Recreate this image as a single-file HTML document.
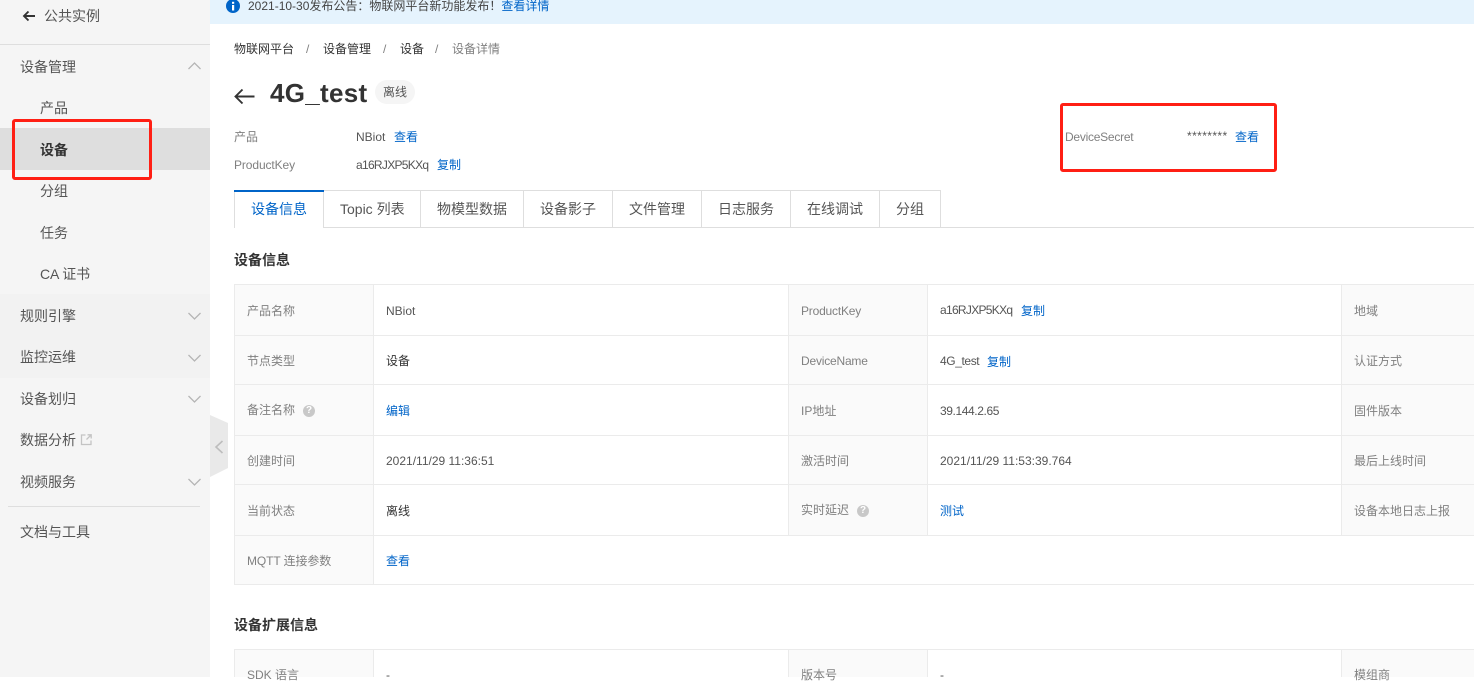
<!DOCTYPE html>
<html lang="zh">
<head>
<meta charset="utf-8">
<style>
html,body{margin:0;padding:0;background:#fff}
body{width:1474px;height:677px;position:relative;overflow:hidden;font-family:"Liberation Sans","Noto Sans CJK SC",sans-serif;color:#333;font-size:12px}
.t{position:absolute;white-space:nowrap;line-height:20px;height:20px}
.a{color:#0064c8}
.l{color:#808080}
.g{color:#555}
.d{color:#333}
.m{font-size:14px;color:#555}
.b{position:absolute;background:#ebebeb}
.c{position:absolute;background:#fafafa}
.tb{position:absolute;background:#dedede}
svg{position:absolute;overflow:visible}
.box{position:absolute;border:3px solid #ff1f14;border-radius:3px;box-sizing:border-box}
.q{position:absolute;width:12px;height:12px;border-radius:50%;background:#c8c8c8;color:#fff;font-size:10px;line-height:12px;text-align:center;font-weight:bold}
</style>
</head>
<body>
<!-- sidebar -->
<div style="position:absolute;left:0;top:0;width:210px;height:677px;background:#f5f5f5"></div>
<div style="position:absolute;left:0;top:128px;width:210px;height:42px;background:#dedede"></div>
<div style="position:absolute;left:0;top:294px;width:210px;height:84px;background:#f2f2f2"></div>
<div style="position:absolute;left:0;top:44px;width:210px;height:1px;background:#dedede"></div>
<div style="position:absolute;left:8px;top:506px;width:192px;height:1px;background:#dedede"></div>
<svg style="left:22px;top:10px" width="14" height="12" viewBox="0 0 14 12"><path d="M13 6H2M6.500 1.500L2 6l4.500 4.500" fill="none" stroke="#333" stroke-width="1.900"/></svg>
<div class="t m" style="left:44px;top:6px">公共实例</div>
<div class="t m" style="left:20px;top:57px">设备管理</div>
<div class="t m" style="left:40px;top:98px">产品</div>
<div class="t" style="left:40px;top:140px;font-size:14px;font-weight:bold;color:#333">设备</div>
<div class="t m" style="left:40px;top:181px">分组</div>
<div class="t m" style="left:40px;top:223px">任务</div>
<div class="t m" style="left:40px;top:264px;letter-spacing:-.1px">CA 证书</div>
<div class="t m" style="left:20px;top:306px">规则引擎</div>
<div class="t m" style="left:20px;top:347px">监控运维</div>
<div class="t m" style="left:20px;top:389px">设备划归</div>
<div class="t m" style="left:20px;top:430px">数据分析</div>
<div class="t m" style="left:20px;top:472px">视频服务</div>
<div class="t m" style="left:20px;top:522px">文档与工具</div>
<svg style="left:188px;top:62px" width="13" height="8" viewBox="0 0 13 8"><path d="M.5 7L6.500 1l6 6" fill="none" stroke="#b5b5b5" stroke-width="1.300"/></svg>
<svg style="left:188px;top:312px" width="13" height="8" viewBox="0 0 13 8"><path d="M.5 1l6 6 6-6" fill="none" stroke="#b5b5b5" stroke-width="1.300"/></svg>
<svg style="left:188px;top:354px" width="13" height="8" viewBox="0 0 13 8"><path d="M.5 1l6 6 6-6" fill="none" stroke="#b5b5b5" stroke-width="1.300"/></svg>
<svg style="left:188px;top:395px" width="13" height="8" viewBox="0 0 13 8"><path d="M.5 1l6 6 6-6" fill="none" stroke="#b5b5b5" stroke-width="1.300"/></svg>
<svg style="left:188px;top:478px" width="13" height="8" viewBox="0 0 13 8"><path d="M.5 1l6 6 6-6" fill="none" stroke="#b5b5b5" stroke-width="1.300"/></svg>
<svg style="left:81px;top:434px" width="11" height="11" viewBox="0 0 11 11"><path d="M4.500 1H.5v9.500h9.500V6.500M6.500 .8h3.700v3.700M10 1L5.500 5.500" fill="none" stroke="#c4c4c4" stroke-width="1.300"/></svg>
<svg style="left:210px;top:415px" width="18" height="62" viewBox="0 0 18 62"><path d="M0 0L18 8V53L0 62Z" fill="#e9e9e9"/><path d="M12.500 26L6 32l6.500 6" fill="none" stroke="#bdbdbd" stroke-width="1.600"/></svg>

<!-- notice -->
<div style="position:absolute;left:210px;top:0;width:1264px;height:24px;background:#e5f3fd"></div>
<svg style="left:226px;top:-1px" width="14" height="14" viewBox="0 0 14 14"><circle cx="7" cy="7" r="7" fill="#0064c8"/><rect x="6" y="6" width="2.200" height="5.500" fill="#fff"/><rect x="6" y="2.800" width="2.200" height="2" fill="#fff"/></svg>
<div class="t" style="left:248px;top:-4px;color:#444">2021-10-30发布公告：物联网平台新功能发布！<span class="a">查看详情</span></div>

<!-- breadcrumb -->
<div class="t d" style="left:234px;top:39px">物联网平台</div>
<div class="t l" style="left:306px;top:39px">/</div>
<div class="t d" style="left:323px;top:39px">设备管理</div>
<div class="t l" style="left:383px;top:39px">/</div>
<div class="t d" style="left:400px;top:39px">设备</div>
<div class="t l" style="left:435px;top:39px">/</div>
<div class="t l" style="left:452px;top:39px">设备详情</div>

<!-- title -->
<svg style="left:234px;top:88px" width="21" height="17" viewBox="0 0 21 17"><path d="M20.500 8.500H1.500M8.500 1.500l-7 7 7 7" fill="none" stroke="#333" stroke-width="1.900"/></svg>
<div class="t" style="left:270px;top:78px;height:30px;line-height:30px;font-size:26px;font-weight:bold;color:#333;letter-spacing:.3px">4G_test</div>
<div style="position:absolute;left:375px;top:80px;width:40px;height:24px;border-radius:12px;background:#f5f5f5;color:#555;text-align:center;line-height:24px">离线</div>

<div class="t l" style="left:234px;top:127px">产品</div>
<div class="t g" style="left:356px;top:127px">NBiot</div>
<div class="t a" style="left:394px;top:127px">查看</div>
<div class="t l" style="left:234px;top:155px;letter-spacing:-.1px">ProductKey</div>
<div class="t g" style="left:356px;top:155px;letter-spacing:-.7px">a16RJXP5KXq</div>
<div class="t a" style="left:437px;top:155px">复制</div>
<div class="t l" style="left:1065px;top:127px;letter-spacing:-.25px">DeviceSecret</div>
<div class="t g" style="left:1187px;top:126px;letter-spacing:.4px">********</div>
<div class="t a" style="left:1235px;top:127px">查看</div>

<!-- tabs -->
<div class="tb" style="left:234px;top:227px;width:1240px;height:1px"></div>
<div class="tb" style="left:323px;top:190px;width:618px;height:1px"></div>
<div class="tb" style="left:234px;top:190px;width:1px;height:38px"></div>
<div class="tb" style="left:323px;top:190px;width:1px;height:38px"></div>
<div class="tb" style="left:420px;top:190px;width:1px;height:38px"></div>
<div class="tb" style="left:523px;top:190px;width:1px;height:38px"></div>
<div class="tb" style="left:612px;top:190px;width:1px;height:38px"></div>
<div class="tb" style="left:701px;top:190px;width:1px;height:38px"></div>
<div class="tb" style="left:790px;top:190px;width:1px;height:38px"></div>
<div class="tb" style="left:879px;top:190px;width:1px;height:38px"></div>
<div class="tb" style="left:940px;top:190px;width:1px;height:38px"></div>
<div style="position:absolute;left:235px;top:191px;width:88px;height:37px;background:#fff"></div>
<div style="position:absolute;left:234px;top:190px;width:90px;height:2px;background:#0064c8"></div>
<div class="t m a" style="left:251px;top:199px;color:#0064c8">设备信息</div>
<div class="t m" style="left:340px;top:199px">Topic 列表</div>
<div class="t m" style="left:437px;top:199px">物模型数据</div>
<div class="t m" style="left:540px;top:199px">设备影子</div>
<div class="t m" style="left:629px;top:199px">文件管理</div>
<div class="t m" style="left:718px;top:199px">日志服务</div>
<div class="t m" style="left:807px;top:199px">在线调试</div>
<div class="t m" style="left:896px;top:199px">分组</div>

<div class="t" style="left:234px;top:250px;font-size:14px;font-weight:bold;color:#333">设备信息</div>

<!-- table 1 backgrounds -->
<div class="c" style="left:235px;top:285px;width:138px;height:299px"></div>
<div class="c" style="left:789px;top:285px;width:138px;height:250px"></div>
<div class="c" style="left:1342px;top:285px;width:132px;height:250px"></div>
<div class="b" style="left:234px;top:284px;width:1240px;height:1px"></div>
<div class="b" style="left:234px;top:335px;width:1240px;height:1px"></div>
<div class="b" style="left:234px;top:384px;width:1240px;height:1px"></div>
<div class="b" style="left:234px;top:435px;width:1240px;height:1px"></div>
<div class="b" style="left:234px;top:484px;width:1240px;height:1px"></div>
<div class="b" style="left:234px;top:535px;width:1240px;height:1px"></div>
<div class="b" style="left:234px;top:584px;width:1240px;height:1px"></div>
<div class="b" style="left:234px;top:284px;width:1px;height:301px"></div>
<div class="b" style="left:373px;top:284px;width:1px;height:301px"></div>
<div class="b" style="left:788px;top:284px;width:1px;height:252px"></div>
<div class="b" style="left:927px;top:284px;width:1px;height:252px"></div>
<div class="b" style="left:1341px;top:284px;width:1px;height:252px"></div>

<div class="t l" style="left:247px;top:301px">产品名称</div>
<div class="t g" style="left:386px;top:301px">NBiot</div>
<div class="t l" style="left:801px;top:301px;letter-spacing:-.2px">ProductKey</div>
<div class="t g" style="left:940px;top:300px;letter-spacing:-.7px">a16RJXP5KXq</div>
<div class="t a" style="left:1021px;top:301px">复制</div>
<div class="t l" style="left:1354px;top:301px">地域</div>

<div class="t l" style="left:247px;top:351px">节点类型</div>
<div class="t d" style="left:386px;top:351px">设备</div>
<div class="t l" style="left:801px;top:351px;letter-spacing:-.2px">DeviceName</div>
<div class="t g" style="left:940px;top:351px;letter-spacing:-.4px">4G_test</div>
<div class="t a" style="left:987px;top:352px">复制</div>
<div class="t l" style="left:1354px;top:351px">认证方式</div>

<div class="t l" style="left:247px;top:400px">备注名称</div>
<div class="q" style="left:303px;top:405px">?</div>
<div class="t a" style="left:386px;top:401px">编辑</div>
<div class="t l" style="left:801px;top:401px">IP地址</div>
<div class="t g" style="left:940px;top:401px;letter-spacing:-.4px">39.144.2.65</div>
<div class="t l" style="left:1354px;top:401px">固件版本</div>

<div class="t l" style="left:247px;top:451px">创建时间</div>
<div class="t g" style="left:386px;top:451px">2021/11/29 11:36:51</div>
<div class="t l" style="left:801px;top:451px">激活时间</div>
<div class="t g" style="left:940px;top:451px">2021/11/29 11:53:39.764</div>
<div class="t l" style="left:1354px;top:451px">最后上线时间</div>

<div class="t l" style="left:247px;top:501px">当前状态</div>
<div class="t d" style="left:386px;top:501px">离线</div>
<div class="t l" style="left:801px;top:500px">实时延迟</div>
<div class="q" style="left:857px;top:505px">?</div>
<div class="t a" style="left:940px;top:501px">测试</div>
<div class="t l" style="left:1354px;top:501px">设备本地日志上报</div>

<div class="t l" style="left:247px;top:551px;letter-spacing:-.1px">MQTT 连接参数</div>
<div class="t a" style="left:386px;top:551px">查看</div>

<div class="t" style="left:234px;top:615px;font-size:14px;font-weight:bold;color:#333">设备扩展信息</div>

<!-- table 2 -->
<div class="c" style="left:235px;top:650px;width:138px;height:27px"></div>
<div class="c" style="left:789px;top:650px;width:138px;height:27px"></div>
<div class="c" style="left:1342px;top:650px;width:132px;height:27px"></div>
<div class="b" style="left:234px;top:649px;width:1240px;height:1px"></div>
<div class="b" style="left:234px;top:649px;width:1px;height:28px"></div>
<div class="b" style="left:373px;top:649px;width:1px;height:28px"></div>
<div class="b" style="left:788px;top:649px;width:1px;height:28px"></div>
<div class="b" style="left:927px;top:649px;width:1px;height:28px"></div>
<div class="b" style="left:1341px;top:649px;width:1px;height:28px"></div>
<div class="t l" style="left:247px;top:665px">SDK 语言</div>
<div class="t g" style="left:386px;top:665px">-</div>
<div class="t l" style="left:801px;top:665px">版本号</div>
<div class="t g" style="left:940px;top:665px">-</div>
<div class="t l" style="left:1354px;top:665px">模组商</div>

<!-- red annotation boxes -->
<div class="box" style="left:12px;top:119px;width:140px;height:61px"></div>
<div class="box" style="left:1060px;top:103px;width:217px;height:69px"></div>
</body>
</html>
